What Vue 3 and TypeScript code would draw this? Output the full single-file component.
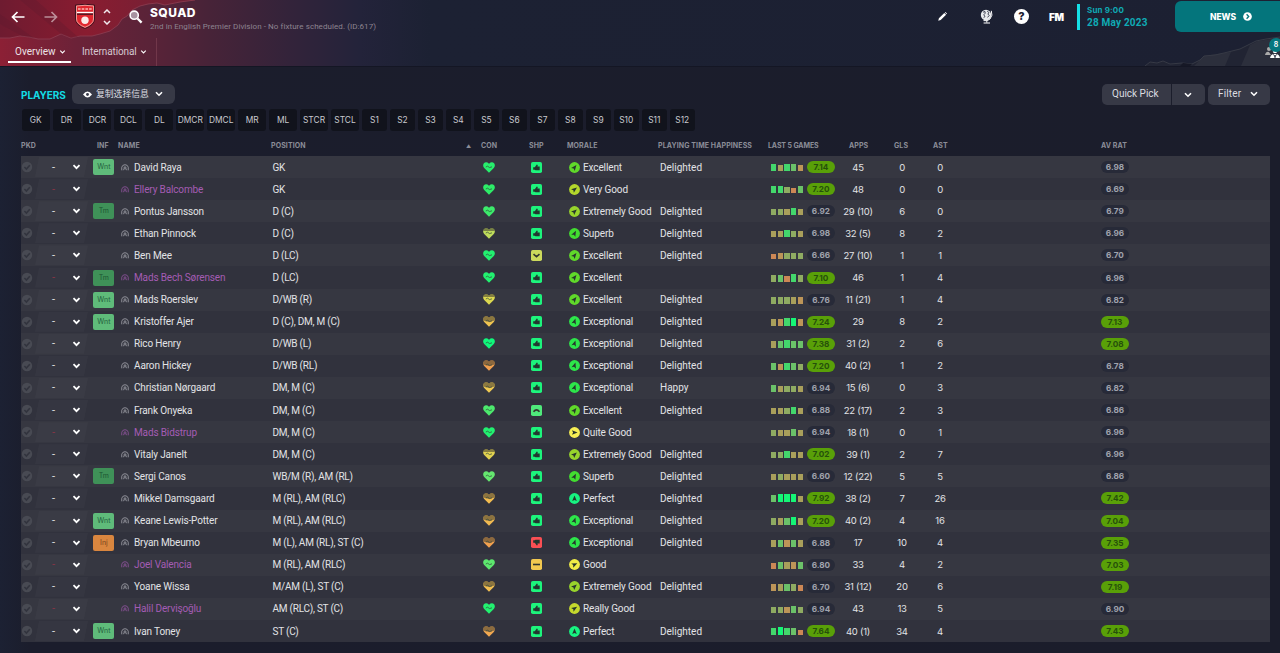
<template>
  <div class="screen">
    <header class="top">
      <svg class="art" viewBox="0 0 1280 66" aria-hidden="true">
        <defs>
          <linearGradient id="torn" x1="0" x2="1" y1="0" y2="0">
            <stop offset="0" stop-color="#6e1b30" />
            <stop offset="0.45" stop-color="#891c30" />
            <stop offset="1" stop-color="#6d2237" />
          </linearGradient>
        </defs>
        <path
          d="M0 0H195L180 2L165 5L157 3L148 4L140 6L132 10L127 16L122 19L118 25L110 31L100 34L92 36L80 36L71 38L61 34L50 39L38 39L29 37L20 36L10 38L0 38Z"
          fill="url(#torn)"
        />
        <path
          d="M195 0L180 2L165 5L157 3L148 4L140 6L132 10L127 16L122 19L118 25L110 31L100 34L92 36L80 36L71 38L61 34L50 39L38 39L29 37L20 36L10 38L0 38"
          fill="none" stroke="#8a3a4e" stroke-width="0.9"
        />
        <path d="M0 14L34 38L22 36L0 24ZM20 0H36L78 37L71 38L61 34Z" fill="#5c1b30" opacity="0.3" />
        <path d="M1145 66L1150 62L1157 63L1163 61L1170 64L1182 63L1192 64L1200 60L1204 56L1215 55L1224 53L1232 51L1240 49L1248 45L1256 41L1266 39L1280 37V66Z" fill="#212433" />
        <path d="M1194 66L1204 56L1224 53L1231 52L1225 66ZM1241 66L1250 45L1258 41L1280 38V66Z" fill="#2c2f3c" />
        <path d="M1145 66L1150 62L1157 63L1163 61L1170 64L1182 63L1192 64L1200 60L1204 56L1215 55L1224 53L1232 51L1240 49L1248 45L1256 41L1266 39L1280 37" fill="none" stroke="#363945" />
        <path d="M1180 66L1183 63L1192 64L1190 66Z" fill="#161826" />
      </svg>

      <div class="bar">
        <svg class="arrow" viewBox="0 0 14 12"><path d="M6.5 1L1.5 6L6.5 11M1.5 6H13.5" /></svg>
        <svg class="arrow dim" viewBox="0 0 14 12"><path d="M7.5 1L12.5 6L7.5 11M12.5 6H0.5" /></svg>
        <svg class="crest" viewBox="0 0 20 25">
          <path d="M0.5 1Q10 -0.5 19.5 1V15Q19.5 21 10 24.5Q0.5 21 0.5 15Z" fill="#e0262e" stroke="#3b1420" />
          <path d="M1.5 2Q10 0.6 18.5 2V15Q18.5 20 10 23.3Q1.5 20 1.5 15Z" fill="none" stroke="#f0b9b4" stroke-width="0.8" />
          <path d="M3 5H17" stroke="#f4928f" stroke-width="1.8" stroke-dasharray="2.6 1.1" />
          <path d="M2 7.8H18V9.4H2Z" fill="#fff" />
          <path d="M2 9.4H18V11H2Z" fill="#5c1520" />
          <circle cx="10" cy="16.2" r="3.7" fill="#fbe9e7" />
        </svg>
        <svg class="updown" viewBox="0 0 8 16"><path d="M1 4L4 1L7 4M1 12L4 15L7 12" /></svg>
        <svg class="search" viewBox="0 0 14 14">
          <circle cx="5.2" cy="5.2" r="4.1" fill="#a893a0" stroke="#fff" stroke-width="1.6" />
          <path d="M8.5 8.5L12.6 12.6" stroke="#fff" stroke-width="2.3" />
        </svg>
        <div class="titles">
          <h1>SQUAD</h1>
          <p>2nd in English Premier Division - No fixture scheduled. (ID:617)</p>
        </div>

        <svg class="pencil" viewBox="0 0 10 10"><path d="M0.3 9.7L1 7L7 1L9 3L3 9ZM7.6 0.5L8.3 0L10 1.7L9.5 2.4Z" fill="#fff" /></svg>
        <svg class="globe" viewBox="0 0 13 15">
          <circle cx="6" cy="6" r="5.2" fill="#e9eaee" />
          <path d="M3 3.2L5 2.5L5.2 4.2L3.8 5.8L5 7.6L3.6 8.6M7.2 2.2L9 3.6L7.8 5L9.2 6.4L7.6 8.4" stroke="#1c2032" fill="none" stroke-width="0.8" />
          <path d="M11.3 1.8Q13.2 6.5 10 10Q7.5 12.5 3.5 11.6M6.8 11.5V13.6M3.6 14H10" stroke="#fff" fill="none" />
        </svg>
        <span class="help">?</span>
        <span class="fm">FM</span>
        <div class="date">
          <span class="time">Sun 9:00</span>
          <span class="day">28 May 2023</span>
        </div>
        <button class="news">
          NEWS
          <svg viewBox="0 0 10 10"><circle cx="5" cy="5" r="4.8" fill="#fff" /><path d="M4 2.6L6.3 5L4 7.4" stroke="#06777e" stroke-width="1.5" fill="none" /></svg>
        </button>
      </div>

      <nav class="tabs">
        <a class="tab active">Overview <svg class="chev" viewBox="0 0 8 6"><path d="M1.4 1.5L4 4L6.6 1.5" /></svg></a>
        <a class="tab">International <svg class="chev" viewBox="0 0 8 6"><path d="M1.4 1.5L4 4L6.6 1.5" /></svg></a>
        <i class="divider"></i>
      </nav>
      <div class="staff">
        <svg viewBox="0 0 18 12" fill="#fff">
          <circle cx="4" cy="3" r="2" fill="#aaa" /><path d="M0 9Q1 5 4 6L6 9Z" fill="#aaa" />
          <circle cx="10" cy="5" r="2.2" /><path d="M5 12Q6 7.5 10 8Q14 7.5 15 12Z" /><path d="M8.5 8.5L10 10.5L11.5 8.5M10 10V12" stroke="#1c2032" fill="none" />
        </svg>
        <span class="count">8</span>
      </div>
    </header>

    <main>
      <div class="toolbar">
        <h2>PLAYERS</h2>
        <button class="btn view">
          <svg class="eye" viewBox="0 0 10 7"><path d="M0 3.5Q5 -3 10 3.5Q5 10 0 3.5Z" fill="#fff" /><circle cx="5" cy="3.5" r="1.6" fill="#3a3c4a" /></svg>
          <span>复制选择信息</span>
          <svg class="chev" viewBox="0 0 8 6"><path d="M1 1.2L4 4.2L7 1.2" /></svg>
        </button>
        <span class="fill"></span>
        <button class="btn pick-main">Quick Pick</button>
        <button class="btn pick-more"><svg class="chev" viewBox="0 0 8 6"><path d="M1 1.2L4 4.2L7 1.2" /></svg></button>
        <button class="btn filter">Filter <svg class="chev" viewBox="0 0 8 6"><path d="M1 1.2L4 4.2L7 1.2" /></svg></button>
      </div>

      <div class="slots">
        <button v-for="slot in slots" :key="slot" :class="{ sub: /^S\d/.test(slot) }">{{ slot }}</button>
      </div>

      <div class="head">
        <span v-for="label in headings" :key="label">{{ label }}</span>
      </div>

      <div class="rows">
        <div v-for="p in players" :key="p.name" class="row" :class="{ loan: p.loan }">
          <svg class="tick" viewBox="0 0 12 12"><circle cx="6" cy="6" r="5.2" fill="#484a53" /><path d="M3.4 6L5.4 8L8.8 4.2" stroke="#32343e" stroke-width="1.6" fill="none" /></svg>
          <div class="picked">
            <span class="dash">-</span>
            <svg class="chev" viewBox="0 0 8 6"><path d="M1 1.2L4 4.2L7 1.2" /></svg>
          </div>
          <div><span v-if="p.inf" class="inf" :class="p.inf.toLowerCase()">{{ p.inf }}</span></div>
          <div class="name">
            <svg viewBox="0 0 9 8"><path d="M0.8 7.2Q0.2 3 2 1.6Q4.5 0 7 1.6Q8.8 3 8.2 7.2" stroke="currentColor" fill="none" stroke-width="1.1" /><path d="M2.9 3.4Q4.5 1.6 6.1 3.4V5.2L7.2 7.2H6L4.5 5.6L3 7.2H1.8L2.9 5.2Z" fill="currentColor" opacity="0.75" /></svg>
            {{ p.name }}
          </div>
          <div class="txt">{{ p.pos }}</div>
          <div class="mid">
            <svg class="heart" viewBox="0 0 12 11">
              <path :d="heartPath" :fill="p.heart" />
              <path v-if="p.tired" :d="p.tired === 2 ? drainedPath : wornPath" fill="#4a4434" opacity="0.6" />
              <path d="M2.8 5L4.6 4.2L6.6 5.6L9 4.8" stroke="#31463b" stroke-width="0.7" fill="none" />
            </svg>
          </div>
          <div class="mid">
            <svg class="shape" viewBox="0 0 11 11">
              <rect width="11" height="11" rx="1.8" :fill="shapes[p.shp].color" />
              <path :d="shapes[p.shp].d" :fill="shapes[p.shp].line ? 'none' : '#22362f'" :stroke="shapes[p.shp].line ? '#33362f' : 'none'" stroke-width="1.6" />
            </svg>
          </div>
          <div class="morale">
            <svg viewBox="0 0 12 12">
              <circle cx="6" cy="6" r="5.9" :fill="morale[p.morale].color" />
              <path d="M6 2.6L8.5 8.8L6 7.5L3.5 8.8Z" fill="#26352d" :transform="`rotate(${morale[p.morale].turn} 6 6)`" />
            </svg>
            {{ p.morale }}
          </div>
          <div class="happy">{{ p.happy }}</div>
          <div class="form">
            <i v-for="(g, n) in p.games" :key="n" :class="'g' + g"></i>
            <span class="pill" :class="{ good: p.form >= '7' }">{{ p.form }}</span>
          </div>
          <div class="num">{{ p.apps }}</div>
          <div class="num">{{ p.gls }}</div>
          <div class="num">{{ p.ast }}</div>
          <div></div>
          <div class="mid"><span class="pill" :class="{ good: p.rating >= '7' }">{{ p.rating }}</span></div>
        </div>
      </div>
    </main>
  </div>
</template>

<script setup lang="ts">
type Shape = 'up' | 'rise' | 'fall' | 'flat' | 'down'

interface Player {
  name: string
  loan: boolean
  inf: string
  pos: string
  heart: string
  tired: number
  shp: Shape
  morale: string
  happy: string
  games: string[]
  form: string
  apps: string
  gls: number
  ast: number
  rating: string
}

const slots = [
  'GK', 'DR', 'DCR', 'DCL', 'DL', 'DMCR', 'DMCL', 'MR', 'ML', 'STCR', 'STCL',
  'S1', 'S2', 'S3', 'S4', 'S5', 'S6', 'S7', 'S8', 'S9', 'S10', 'S11', 'S12',
]

const headings = [
  'PKD', 'INF', 'NAME', 'POSITION', '▲', 'CON', 'SHP', 'MORALE',
  'PLAYING TIME HAPPINESS', 'LAST 5 GAMES', 'APPS', 'GLS', 'AST', 'AV RAT',
]

const heartPath = 'M6 10.8L1.2 6.1Q-0.6 3.8 0.7 1.6Q3 -0.9 6 1.7Q9 -0.9 11.3 1.6Q12.6 3.8 10.8 6.1Z'
const wornPath = 'M0.3 3Q0.3 2 0.7 1.6Q3 -0.9 6 1.7Q9 -0.9 11.3 1.6Q11.8 2 11.7 3Z'
const drainedPath = 'M0.3 4.4Q0 2.8 0.7 1.6Q3 -0.9 6 1.7Q9 -0.9 11.3 1.6Q12 2.8 11.7 4.4L6 6Z'

const shapes: Record<Shape, { color: string; d: string; line?: boolean }> = {
  up: { color: '#1df47c', d: 'M2.2 5.3H3.8L5.8 2.6L6.8 3L6.4 4.6H8.7V8.3H4.5L3.8 7.8H2.2Z' },
  rise: { color: '#4fe97b', d: 'M2.5 6.7Q5.5 3 8.5 6.7', line: true },
  fall: { color: '#ccd95c', d: 'M2.5 4.2L5.5 6.7L8.5 4.2', line: true },
  flat: { color: '#f2c84f', d: 'M2 5.5H9', line: true },
  down: { color: '#fa4f54', d: 'M2.2 5.7H3.8L5.8 8.4L6.8 8L6.4 6.4H8.7V2.7H4.5L3.8 3.2H2.2Z' },
}

const morale: Record<string, { color: string; turn: number }> = {
  Perfect: { color: '#17f381', turn: 0 },
  Exceptional: { color: '#2de64a', turn: 18 },
  Superb: { color: '#42dd30', turn: 28 },
  Excellent: { color: '#60d92a', turn: 38 },
  'Extremely Good': { color: '#98d42c', turn: 48 },
  'Very Good': { color: '#b4d72c', turn: 53 },
  'Really Good': { color: '#c6d92d', turn: 58 },
  Good: { color: '#f1ed46', turn: 64 },
  'Quite Good': { color: '#f7ef54', turn: 90 },
}

// name | info | position | heart | tired | shape | morale | happiness | games | form | apps | gls | ast | rating
// A leading * marks a player out on loan.
const squad = `
David Raya|Wnt|GK|#27ef6d|0|up|Excellent|Delighted|52541|7.14|45|0|0|6.98
*Ellery Balcombe||GK|#2dec68|0|up|Very Good||55304|7.20|48|0|0|6.69
Pontus Jansson|Tm|D (C)|#3ceb6b|0|up|Extremely Good|Delighted|33252|6.92|29 (10)|6|0|6.79
Ethan Pinnock||D (C)|#bfdc5b|1|up|Superb|Delighted|22532|6.98|32 (5)|8|2|6.96
Ben Mee||D (LC)|#22f170|0|fall|Excellent|Delighted|01333|6.66|27 (10)|1|1|6.70
*Mads Bech Sørensen|Tm|D (LC)|#22f170|0|up|Excellent||34053|7.10|46|1|4|6.96
Mads Roerslev|Wnt|D/WB (R)|#dcd850|1|up|Excellent|Delighted|33321|6.76|11 (21)|1|4|6.82
Kristoffer Ajer|Wnt|D (C), DM, M (C)|#eec351|2|up|Exceptional|Delighted|21561|7.24|29|8|2|7.13
Rico Henry||D/WB (L)|#10f77b|0|up|Exceptional|Delighted|24544|7.38|31 (2)|2|6|7.08
Aaron Hickey||D/WB (RL)|#f09f4f|2|up|Exceptional|Delighted|41543|7.20|40 (2)|1|2|6.78
Christian Nørgaard||DM, M (C)|#efc953|2|up|Exceptional|Happy|42332|6.94|15 (6)|0|3|6.82
Frank Onyeka||DM, M (C)|#4ce96d|0|rise|Excellent|Delighted|22352|6.88|22 (17)|2|3|6.86
*Mads Bidstrup||DM, M (C)|#22f170|0|up|Quite Good||32242|6.94|18 (1)|0|1|6.96
Vitaly Janelt||DM, M (C)|#e1d150|1|up|Extremely Good|Delighted|33522|7.02|39 (1)|2|7|6.96
Sergi Canos|Tm|WB/M (R), AM (RL)|#65e66f|0|up|Superb|Delighted|23222|6.60|12 (22)|5|5|6.86
Mikkel Damsgaard||M (RL), AM (RLC)|#f2bc50|2|up|Perfect|Delighted|46662|7.92|38 (2)|7|26|7.42
Keane Lewis-Potter|Wnt|M (RL), AM (RLC)|#f1b951|2|up|Exceptional|Delighted|32462|7.20|40 (2)|4|16|7.04
Bryan Mbeumo|Inj|M (L), AM (RL), ST (C)|#f0a04f|2|down|Exceptional|Delighted|24142|6.88|17|10|4|7.35
*Joel Valencia||M (RL), AM (RLC)|#5de76e|0|flat|Good||04214|6.80|33|4|2|7.03
Yoane Wissa||M/AM (L), ST (C)|#f1be51|2|up|Extremely Good|Delighted|12430|6.70|31 (12)|20|6|7.19
*Halil Dervişoğlu||AM (RLC), ST (C)|#22f170|0|up|Really Good||33143|6.94|43|13|5|6.90
Ivan Toney|Wnt|ST (C)|#f1a851|2|up|Perfect|Delighted|56540|7.64|40 (1)|34|4|7.43
`

const players: Player[] = squad.trim().split('\n').map((line) => {
  const c = line.split('|')
  return {
    name: c[0].replace('*', ''),
    loan: c[0].startsWith('*'),
    inf: c[1],
    pos: c[2],
    heart: c[3],
    tired: Number(c[4]),
    shp: c[5] as Shape,
    morale: c[6],
    happy: c[7],
    games: c[8].split(''),
    form: c[9],
    apps: c[10],
    gls: Number(c[11]),
    ast: Number(c[12]),
    rating: c[13],
  }
})
</script>

<style>
body {
  background: #1b1e2d;
}
</style>

<style scoped>
.screen {
  width: 1280px;
  height: 653px;
  overflow: hidden;
  background: linear-gradient(90deg, #1c2133 0, #1b1d2c 30px, #1b1d2b 100%);
  color: #e2e3e6;
  font-family: Roboto, "Noto Sans CJK SC", sans-serif;
  font-size: 10px;
}

button {
  border: 0;
  padding: 0;
  font: inherit;
  color: inherit;
}

svg {
  flex: none;
  display: block;
}

.top {
  position: relative;
  height: 66px;
  border-bottom: 1px solid #141624;
  background: linear-gradient(90deg, #8c2035 0, #6c2238 75px, #5a2338 150px, #472338 210px, #33233a 290px, #23233a 360px, #1c2133 430px, #1c2032 100%);
}

.art {
  position: absolute;
  inset: 0;
  width: 1280px;
  height: 66px;
}

.bar {
  position: relative;
  display: flex;
  height: 33px;
  align-items: center;
  padding-left: 11px;
}

.bar > * {
  flex: none;
}

.arrow {
  width: 14px;
  height: 12px;
  margin-right: 19px;
  fill: none;
  stroke: #fff;
  stroke-width: 1.7;
}

.arrow.dim {
  opacity: 0.5;
  margin-right: 17px;
}

.crest {
  width: 20px;
  height: 25px;
}

.updown {
  width: 8px;
  height: 16px;
  margin: 0 18px 0 8px;
  fill: none;
  stroke: #f0e8ec;
  stroke-width: 1.5;
}

.search {
  width: 14px;
  height: 14px;
  margin-right: 7px;
}

.titles {
  width: 788px;
  padding-top: 5px;
}

h1 {
  margin: 0;
  font: 800 12px/14px Inter, sans-serif;
  letter-spacing: 0.45px;
  color: #fff;
}

.titles p {
  margin: 0;
  font-size: 8px;
  line-height: 13px;
  color: #8d8390;
  letter-spacing: 0.07px;
}

.pencil {
  width: 9px;
  height: 9px;
}

.globe {
  width: 13px;
  height: 15px;
  margin-left: 33px;
}

.help {
  width: 15px;
  height: 15px;
  margin-left: 21px;
  border-radius: 50%;
  background: #fff;
  color: #1c2032;
  font: 800 11px/15px Inter, sans-serif;
  text-align: center;
}

.fm {
  width: 28px;
  margin-left: 20px;
  color: #fff;
  font: 900 10px/12px Inter, sans-serif;
  letter-spacing: -0.4px;
}

.date {
  display: flex;
  flex-direction: column;
  width: 88px;
  height: 26px;
  border-left: 3px solid #15dfe6;
  padding-left: 7px;
  color: #0fabb5;
  font-weight: 700;
}

.time {
  font: 700 8px/12px Inter, sans-serif;
  letter-spacing: 0.15px;
}

.day {
  font-size: 10px;
  line-height: 13px;
  letter-spacing: 0.2px;
}

.news {
  display: flex;
  align-items: center;
  justify-content: center;
  gap: 7px;
  width: 112px;
  height: 31px;
  border-radius: 6px;
  background: #04757c;
  color: #fff;
  font: 800 8.5px/12px Inter, sans-serif;
}

.news svg {
  width: 9px;
  height: 9px;
}

.tabs {
  position: relative;
  display: flex;
  height: 33px;
  padding-left: 8px;
}

.tab {
  display: flex;
  align-items: center;
  height: 26px;
  padding: 4px 5px 0 7px;
  gap: 3px;
  border-bottom: 2px solid transparent;
  box-sizing: border-box;
  margin: 4px 4px 0 0;
  color: #d5c7cf;
  font-size: 10px;
}

.tab + .tab {
  padding-right: 4px;
  letter-spacing: -0.1px;
}

.tab.active {
  border-color: #fff;
  color: #ece3e7;
  width: 63px;
}

.divider {
  width: 1px;
  height: 28px;
  margin: 5px 0 0 1px;
  background: #71374a;
}

.chev {
  width: 8px;
  height: 6px;
  fill: none;
  stroke: #fff;
  stroke-width: 1.6;
}

.tab .chev {
  width: 7px;
  margin-top: 1px;
  stroke-width: 1.3;
}

.staff {
  position: absolute;
  left: 1265px;
  top: 38px;
  width: 18px;
}

.staff svg {
  width: 18px;
  height: 12px;
  margin-top: 8px;
}

.count {
  position: absolute;
  left: 4px;
  top: 0;
  width: 14px;
  height: 14px;
  border-radius: 50%;
  background: #05787f;
  color: #fff;
  font: 600 7px/14px Inter, sans-serif;
  text-align: center;
}

main {
  padding: 17px 10px 0 21px;
}

.toolbar {
  display: flex;
  height: 21px;
}

h2 {
  width: 51px;
  margin: 0;
  padding-top: 4px;
  font: 700 10px/15px Inter, sans-serif;
  letter-spacing: -0.1px;
  color: #13dce5;
}

.btn {
  display: flex;
  align-items: center;
  height: 21px;
  border-radius: 5px;
  background: #373946;
  color: #dcdde1;
}

.view {
  width: 103px;
  height: 20px;
  padding-left: 11px;
  border-radius: 6px;
  font-family: "Noto Sans CJK SC", sans-serif;
  font-size: 8.8px;
}

.view span {
  margin: 0 6px 1px 4px;
  white-space: nowrap;
}

.eye {
  width: 9px;
  height: 7px;
}

.fill {
  flex: 1;
}

.pick-main {
  width: 69px;
  padding: 0 0 2px 10px;
  border-radius: 5px 0 0 5px;
}

.pick-more {
  width: 33px;
  margin: 0 3px 0 1px;
  padding-right: 2px;
  justify-content: center;
  border-radius: 0 5px 5px 0;
}

.filter {
  width: 62px;
  padding: 0 0 2px 10px;
  gap: 9px;
  letter-spacing: 0.15px;
}

.slots {
  display: flex;
  gap: 2.95px;
  margin-top: 4px;
  padding-left: 0.6px;
}

.slots button {
  width: 28px;
  height: 22px;
  border-radius: 3px;
  background: #11131c;
  color: #c9cacf;
  font-family: Inter, sans-serif;
  font-size: 8.4px;
  line-height: 22px;
  white-space: nowrap;
}

.slots .sub {
  width: 25.05px;
}

.head {
  display: grid;
  grid-template-columns: 76px 21px 153px 195px 15px 48px 38px 91px 110px 81px 45px 39px 168px 1fr;
  height: 25px;
  padding-top: 3px;
  box-sizing: border-box;
  color: #8b8d98;
  font: 700 7px/24px Inter, sans-serif;
  letter-spacing: 0.1px;
  white-space: nowrap;
}

.head span:nth-child(5) {
  font-size: 5px;
}

.head span:nth-child(10) {
  letter-spacing: -0.1px;
}

.row {
  display: grid;
  grid-template-columns: 14px 55px 31px 151px 193px 47px 49px 99px 111px 64px 46px 42px 34px 135px 46px 1fr;
  height: 22.1px;
  align-items: center;
  background: #31323d;
  white-space: nowrap;
}

.row:nth-child(odd) {
  background: #363741;
}

.tick {
  width: 12px;
  height: 12px;
}

.picked {
  display: flex;
  align-items: center;
  width: 53px;
  height: 20px;
  background: rgba(255, 255, 255, 0.025);
  clip-path: polygon(4px 0, 100% 0, 49px 100%, 0 100%);
}

.dash {
  width: 20px;
  padding-left: 17px;
  font-size: 11px;
}

.picked .chev {
  width: 9px;
  height: 6px;
  stroke-width: 1.8;
}

.loan .dash {
  color: #8a3546;
}

.inf {
  display: block;
  width: 21px;
  height: 16px;
  margin-left: 3.4px;
  border-radius: 2px;
  background: #5fbb7a;
  color: #24613d;
  font-family: Inter, sans-serif;
  font-size: 7px;
  line-height: 16px;
  text-align: center;
}

.inf.tm {
  background: #3f9158;
  color: #1c5533;
}

.inf.inj {
  background: #d9863f;
  color: #7b451c;
}

.name {
  display: flex;
  align-items: center;
  gap: 5px;
  letter-spacing: -0.14px;
}

.name svg {
  width: 8px;
  height: 7px;
  color: #92939b;
}

.loan .name,
.loan .name svg {
  color: #a55cb4;
}

.loan .name svg {
  opacity: 0.7;
}

.txt {
  padding-left: 0.5px;
  letter-spacing: -0.23px;
}

.mid {
  display: flex;
  justify-content: center;
}

.heart {
  width: 12px;
  height: 11px;
}

.shape {
  width: 11px;
  height: 11px;
}

.morale {
  display: flex;
  align-items: center;
  gap: 3px;
  padding-left: 8px;
  letter-spacing: -0.12px;
}

.morale svg {
  width: 11px;
  height: 11px;
}

.form {
  display: flex;
  align-items: flex-end;
  height: 12px;
}

.form i {
  width: 5.4px;
  height: 6.4px;
  margin: 0 1.3px 2px 0;
}

.form .pill {
  margin-left: 2.5px;
}

.form .g0 { background: #cc8755; height: 5.4px; }
.form .g1 { background: #bd9558; }
.form .g2 { background: #a99f5b; }
.form .g3 { background: #8fab62; }
.form .g4 { background: #6bc169; height: 7px; }
.form .g5 { background: #43d76c; height: 7.4px; }
.form .g6 { background: #15f676; height: 8px; }

.pill {
  flex: none;
  width: 28px;
  height: 12px;
  border-radius: 6px;
  background: #272a38;
  color: #a0a3ad;
  font: 700 8.2px/12.5px Inter, sans-serif;
  text-align: center;
}

.pill.good {
  background: #59a008;
  color: #26500b;
}

.num {
  text-align: center;
  font-family: Inter, sans-serif;
  font-size: 9.5px;
  letter-spacing: -0.25px;
}
</style>
